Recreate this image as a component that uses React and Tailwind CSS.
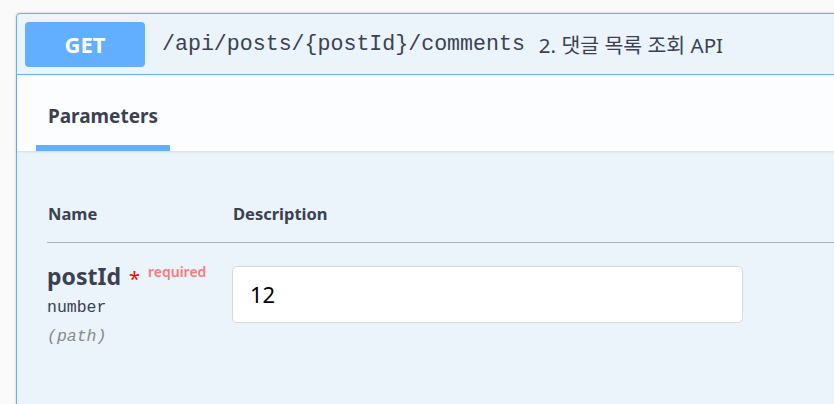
export default function App() {
  return (
    <div className="w-[834px] h-[404px] overflow-hidden bg-[#fafafa] pt-[13px] pl-4">
      <div className="w-[900px] h-[420px] border border-[#61affe] rounded-tl-[4px] bg-[#ebf3fb] shadow-[0_0_3px_rgba(0,0,0,0.19)]">
        {/* summary */}
        <div className="flex items-center h-[61px] border-b border-[#61affe] pl-2">
          <div className="w-[120px] h-[45px] rounded-[4px] bg-[#61affe] text-white font-bold text-[22px] flex items-center justify-center font-['Noto_Sans',sans-serif]">
            GET
          </div>
          <span className="ml-[17px] text-[21.6px] text-[#3b4151] font-['Liberation_Mono',monospace]">
            /api/posts/&#123;postId&#125;/comments
          </span>
          <span className="ml-[14px] mt-[2px] text-[20.5px] text-[#3b4151] font-['Noto_Sans','Noto_Sans_CJK_KR',sans-serif]">
            2. 댓글 목록 조회 API
          </span>
        </div>
        {/* tab header */}
        <div className="h-[76px] bg-[#fbfdfe] shadow-[0_1px_2px_rgba(0,0,0,0.1)] pl-[19px] flex items-end">
          <div className="w-[134px] h-[74px] border-b-[6px] border-[#61affe] flex items-center justify-center pt-[10px]">
            <span className="text-[19px] font-bold text-[#3b4151] font-['Noto_Sans',sans-serif]">Parameters</span>
          </div>
        </div>
        {/* table */}
        <div className="pl-[30px] pt-[51px] font-['Noto_Sans',sans-serif] text-[#3b4151]">
          <div className="flex h-[41px] border-b border-[#a4b1c1] text-[16.5px] font-bold">
            <div className="w-[186px] pl-[1px]">Name</div>
            <div>Description</div>
          </div>
          <div className="flex pt-[23px]">
            <div className="w-[185px] -mt-[4px]">
              <div className="flex items-start">
                <span className="text-[23px] font-bold leading-[28px]">postId</span>
                <span className="ml-[8px] text-[20px] text-[#ff0000] leading-[26px] mt-[4px]">*</span>
                <span className="ml-[8px] text-[14px] text-[#f97b7b] leading-[20px] font-semibold">required</span>
              </div>
              <div className="mt-[4px] text-[16.5px] font-['Liberation_Mono',monospace] leading-[24px]">number</div>
              <div className="mt-[5px] text-[16.5px] italic text-[#8a8a8a] font-['Liberation_Mono',monospace] leading-[24px]">(path)</div>
            </div>
            <div className="w-[511px] h-[57px] bg-white border border-[#d9d9d9] rounded-[5px] flex items-center pl-[17px] text-[22px] text-black">
              12
            </div>
          </div>
        </div>
      </div>
    </div>
  );
}
